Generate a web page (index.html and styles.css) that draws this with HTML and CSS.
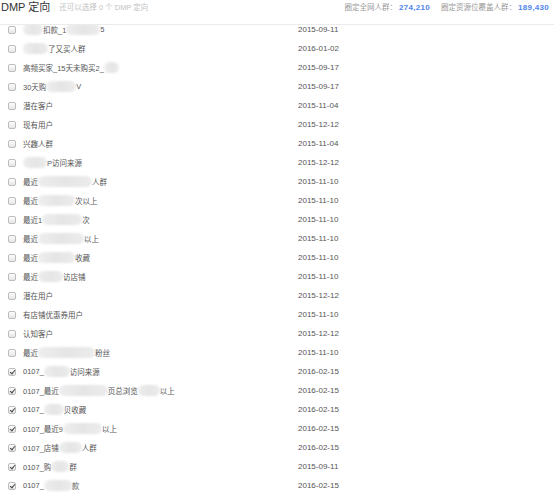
FILE: index.html
```html
<!DOCTYPE html>
<html lang="zh">
<head>
<meta charset="utf-8">
<title>DMP 定向</title>
<link rel="stylesheet" href="styles.css">
</head>
<body>
<div class="header">
  <div class="title">DMP 定向</div>
  <div class="hint">还可以选择 0 个 DMP 定向</div>
  <div class="stats">
    <span class="label">圈定全网人群：</span><span class="num">274,210</span>
    <span class="label second">圈定资源位覆盖人群：</span><span class="num">189,430</span>
  </div>
</div>
<div class="list">
  <div class="inner">
    <div class="row"><span class="cb"></span><span class="name"><span class="blob w20"></span>扣款_1<span class="blob w34"></span>5</span><span class="date">2015-09-11</span></div>
    <div class="row"><span class="cb"></span><span class="name"><span class="blob w25"></span>了又买人群</span><span class="date">2016-01-02</span></div>
    <div class="row"><span class="cb"></span><span class="name">高频买家_15天未购买2_<span class="blob w15"></span></span><span class="date">2015-09-17</span></div>
    <div class="row"><span class="cb"></span><span class="name">30天购<span class="blob w30"></span>V</span><span class="date">2015-09-17</span></div>
    <div class="row"><span class="cb"></span><span class="name">潜在客户</span><span class="date">2015-11-04</span></div>
    <div class="row"><span class="cb"></span><span class="name">现有用户</span><span class="date">2015-12-12</span></div>
    <div class="row"><span class="cb"></span><span class="name">兴趣人群</span><span class="date">2015-11-04</span></div>
    <div class="row"><span class="cb"></span><span class="name"><span class="blob w24"></span>P访问来源</span><span class="date">2015-12-12</span></div>
    <div class="row"><span class="cb"></span><span class="name">最近<span class="blob w54"></span>人群</span><span class="date">2015-11-10</span></div>
    <div class="row"><span class="cb"></span><span class="name">最近<span class="blob w37"></span>次以上</span><span class="date">2015-11-10</span></div>
    <div class="row"><span class="cb"></span><span class="name">最近1<span class="blob w40"></span>次</span><span class="date">2015-11-10</span></div>
    <div class="row"><span class="cb"></span><span class="name">最近<span class="blob w46"></span>以上</span><span class="date">2015-11-10</span></div>
    <div class="row"><span class="cb"></span><span class="name">最近<span class="blob w37"></span>收藏</span><span class="date">2015-11-10</span></div>
    <div class="row"><span class="cb"></span><span class="name">最近<span class="blob w25"></span>访店铺</span><span class="date">2015-11-10</span></div>
    <div class="row"><span class="cb"></span><span class="name">潜在用户</span><span class="date">2015-12-12</span></div>
    <div class="row"><span class="cb"></span><span class="name">有店铺优惠券用户</span><span class="date">2015-11-10</span></div>
    <div class="row"><span class="cb"></span><span class="name">认知客户</span><span class="date">2015-12-12</span></div>
    <div class="row"><span class="cb"></span><span class="name">最近<span class="blob w57"></span>粉丝</span><span class="date">2015-11-10</span></div>
    <div class="row"><span class="cb on"></span><span class="name">0107_<span class="blob w26"></span>访问来源</span><span class="date">2016-02-15</span></div>
    <div class="row"><span class="cb on"></span><span class="name">0107_最近<span class="blob w49"></span>页总浏览<span class="blob w22"></span>以上</span><span class="date">2016-02-15</span></div>
    <div class="row"><span class="cb on"></span><span class="name">0107_<span class="blob w20"></span>贝收藏</span><span class="date">2016-02-15</span></div>
    <div class="row"><span class="cb on"></span><span class="name">0107_最近9<span class="blob w39"></span>以上</span><span class="date">2016-02-15</span></div>
    <div class="row"><span class="cb on"></span><span class="name">0107_店铺<span class="blob w23"></span>人群</span><span class="date">2016-02-15</span></div>
    <div class="row"><span class="cb on"></span><span class="name">0107_购<span class="blob w18"></span>群</span><span class="date">2015-09-11</span></div>
    <div class="row"><span class="cb on"></span><span class="name">0107_<span class="blob w28"></span>款</span><span class="date">2016-02-15</span></div>
  </div>
</div>
</body>
</html>
```
FILE: styles.css
```css
html, body {
  margin: 0;
  padding: 0;
  background: #fff;
}
body {
  font-family: "Liberation Sans", "Noto Sans CJK SC", sans-serif;
  color: #555;
  width: 554px;
  height: 497px;
  overflow: hidden;
}
.header {
  display: flex;
  align-items: flex-start;
  height: 24px;
  border-bottom: 1px solid #ebebeb;
  padding: 0 5px 0 1px;
  position: relative;
  z-index: 1;
  background: #fff;
}
.title {
  font-size: 11px;
  line-height: 15px;
  color: #333;
}
.hint {
  margin-left: 9px;
  font-size: 7.5px;
  line-height: 15px;
  color: #c2c2c2;
}
.stats {
  margin-left: auto;
  font-size: 7.5px;
  line-height: 15px;
  color: #9a9a9a;
  display: flex;
  align-items: baseline;
}
.num {
  font-size: 8px;
  font-weight: bold;
  color: #4f86ec;
  margin-left: 2px;
  letter-spacing: 0.3px;
}
.second {
  margin-left: 11px;
}
.list {
  height: 472px;
  overflow: hidden;
}
.inner {
  margin-top: -5px;
}
.row {
  display: flex;
  align-items: center;
  height: 19px;
  font-size: 7.5px;
  color: #555;
}
.cb {
  box-sizing: border-box;
  width: 8px;
  height: 8px;
  margin-left: 8px;
  border: 1px solid #bcbcbc;
  border-radius: 2px;
  background: linear-gradient(#fdfdfd, #e6e6e6);
  position: relative;
  flex: none;
}
.cb.on::after {
  content: "";
  position: absolute;
  left: 1.5px;
  top: 0px;
  width: 2px;
  height: 4px;
  border: solid #444;
  border-width: 0 1.3px 1.3px 0;
  transform: rotate(40deg);
}
.name {
  margin-left: 7px;
  width: 275px;
  display: flex;
  align-items: center;
  white-space: nowrap;
}
.date {
  font-size: 8px;
  color: #555;
}
.blob {
  display: inline-block;
  height: 11px;
  border-radius: 6px;
  background: linear-gradient(90deg, #eeeeee, #e5e5e5 50%, #ececec);
  filter: blur(1px);
}
.w15 { width: 15px; }
.w18 { width: 18px; }
.w20 { width: 20px; }
.w22 { width: 22px; }
.w23 { width: 23px; }
.w24 { width: 24px; }
.w25 { width: 25px; }
.w26 { width: 26px; }
.w28 { width: 28px; }
.w30 { width: 30px; }
.w34 { width: 34px; }
.w37 { width: 37px; }
.w39 { width: 39px; }
.w40 { width: 40px; }
.w46 { width: 46px; }
.w49 { width: 49px; }
.w54 { width: 54px; }
.w57 { width: 57px; }
```
